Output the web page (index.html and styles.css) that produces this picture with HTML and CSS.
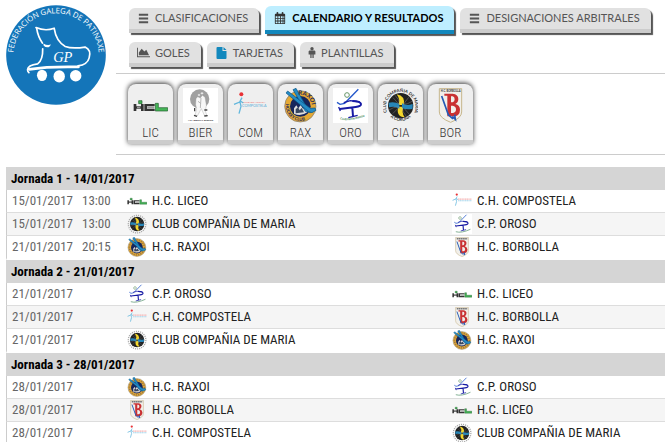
FILE: index.html
```
<!DOCTYPE html>
<html lang="es">
<head>
<meta charset="utf-8">
<title>Calendario y resultados</title>
<link rel="stylesheet" href="styles.css">
</head>
<body>
<svg class="sprite" aria-hidden="true">
  <symbol id="bars" viewBox="0 0 14 14"><path d="M2 2h10v2H2zM2 6h10v2H2zM2 10h10v2H2z"/></symbol>
  <symbol id="calendar" viewBox="0 0 14 14"><path fill-rule="evenodd" d="M2 2h1V1q0-1 1-1t1 1v1h4V1q0-1 1-1t1 1v1h1q1 0 1 1v10q0 1-1 1H2q-1 0-1-1V3q0-1 1-1zM2 5v2h2V5zm3 0v2h2V5zm3 0v2h2V5zm3 0v2h1V5zM2 8v2h2V8zm3 0v2h2V8zm3 0v2h2V8zm3 0v2h1V8zM2 11v2h2v-2zm3 0v2h2v-2zm3 0v2h2v-2zm3 0v2h1v-2z"/></symbol>
  <symbol id="chart" viewBox="0 0 14 12"><path d="M0 1h1v9h13v1H0zM2 9V6l3-4 3 3 2-2 3 6z"/></symbol>
  <symbol id="file" viewBox="0 0 12 13"><path d="M2 1h5v4h4v7q0 1-1 1H2q-1 0-1-1V2q0-1 1-1zM8 1l3 3H8z"/></symbol>
  <symbol id="person" viewBox="0 0 8 13"><circle cx="4" cy="2" r="2"/><path d="M1 4h6l1 1v4H6v4H4.500V9h-1v4H2V9H0V5z"/></symbol>

  <symbol id="liceo" viewBox="0 0 105 105">
    <path fill="#45b557" stroke="#205c2c" stroke-width="2" d="M17 38h10v9H17zM67 46h9v13h28v10H67z"/>
    <path fill="#333" d="M2 48h8v7h14v-7h8v21h-8v-7H10v7H2zM34 48h31v6H43v9h22v6H34z"/>
    <path fill="#999" d="M12 56h10v5H12zM45 55h19v7H45z"/>
  </symbol>
  <symbol id="bierzo" viewBox="0 0 105 105">
    <path fill="#fff" d="M0 0h105v105H0z"/><circle cx="50" cy="33" r="29" fill="#a0a0a0"/>
    <path fill="#f7f7f7" stroke="#999" stroke-width="1" d="M44 26l8 4 6-8 8 6 4 24-3 17 5 15h-7L55 62 43 84l-7-1 5-21-3-12 1-18z"/>
    <circle cx="48" cy="21" r="4" fill="#eee" stroke="#888"/><circle cx="57" cy="16" r="4" fill="#eee" stroke="#888"/>
    <path stroke="#444" stroke-width="4" d="M35 60v10M64 66h9M33 82l9 3M64 84l10-1"/>
    <path stroke="#999" stroke-width="2" d="M54 30l-2 30M45 40l8 6" fill="none"/>
    <text x="53" y="100" class="crest-text tiny" text-anchor="middle">HC ABERTAL BIERZO</text>
  </symbol>
  <symbol id="compostela" viewBox="0 0 105 105">
    <circle cx="25" cy="19" r="6" fill="#e83236"/>
    <path d="M27 29L20 42 3 49M21 42l3 13-6 22M22 39l9 6" fill="none" stroke="#62b7dd" stroke-width="4"/>
    <path class="crest-line" d="M32 43h71" stroke="#f5b5b5" stroke-width="6" stroke-dasharray="7 2"/>
    <path class="crest-line" d="M32 51h71" stroke="#a5d5ec" stroke-width="6" stroke-dasharray="7 2"/>
    <text x="30" y="45" class="crest-text club-red">CLUB DE HOCKEY</text>
    <text x="27" y="56" class="crest-text club-blue">COMPOSTELA</text>
  </symbol>
  <symbol id="raxoi" viewBox="0 0 105 105">
    <circle cx="52" cy="55" r="47" fill="#e5a934" stroke="#777" stroke-width="2"/><circle cx="52" cy="55" r="31" fill="#17265b"/>
    <circle class="crest-line" cx="52" cy="55" r="39" fill="none" stroke="#9b7a45" stroke-width="8" stroke-dasharray="7 5"/>
    <path d="M33 77V61l7-9 6 9 7-10 7 11 8-5 5 16q-20 14-40 4z" fill="#ddd"/>
    <path d="M38 76V64l7-6 5 9 6-7 7 13z" fill="#384760"/>
    <path d="M30 5l9-4 32 57 13 8-1 8-16-4z" fill="#258bc5" stroke="#075585" stroke-width="2"/>
    <path d="M9 15l5-6 68 52 14-1 3 7-12 7-10-3z" fill="#258bc5" stroke="#075585" stroke-width="2"/>
    <path id="raxoi-top" d="M46 21A35 35 0 0 1 86 62" fill="none"/><path id="raxoi-low" d="M9 48A44 44 0 0 0 92 74" fill="none"/>
    <text class="crest-text rax-name"><textPath href="#raxoi-top">RAXOI</textPath></text><text class="crest-text rax-club"><textPath href="#raxoi-low">HOCKEY CLUB</textPath></text>
  </symbol>
  <symbol id="oroso" viewBox="0 0 105 105">
    <path fill="#fff" d="M0 0h105v105H0z"/><circle cx="42" cy="21" r="7" fill="none" stroke="#669568" stroke-width="3"/>
    <path d="M76 4L35 46l-14 3-9-6" fill="none" stroke="#2559cb" stroke-width="4"/>
    <path d="M32 44l20-6 28 4" fill="none" stroke="#171ba4" stroke-width="4"/>
    <path d="M58 39q24 0 26 9 1 7-16 9l-48 6M58 59l2 25" fill="none" stroke="#171ba4" stroke-width="6"/>
    <path d="M17 57l5 12M46 89l28-7" fill="none" stroke="#171ba4" stroke-width="4"/>
    <path class="crest-line" d="M20 93q30 9 77-13" fill="none" stroke="#7fae91" stroke-width="5"/>
    <path id="oro-line" d="M21 94q33 9 82-12" fill="none"/>
    <text class="crest-text oro-name"><textPath href="#oro-line">CLUB PATÍN OROSO</textPath></text>
  </symbol>
  <symbol id="maria" viewBox="0 0 105 105">
    <circle cx="53" cy="53" r="38" fill="#222"/>
    <circle class="crest-line" cx="53" cy="53" r="46" fill="none" stroke="#aaa" stroke-width="7" stroke-dasharray="6 5"/>
    <path d="M41 19q27 5 21 32H46q7-16-5-32zM46 56h16q-8 16 3 32-27-3-19-32z" fill="#f3d62c"/>
    <path d="M17 44q20-3 32 4v14q-13-9-31-4zM57 46q14 9 32 2v14q-18 4-32-2z" fill="#2786b8"/>
    <path d="M36 22q14 13 14 27M89 39q-16 11-29 10M18 66q12-9 31-10M70 85q-13-13-12-28M30 29l18 20M77 28L62 48M29 77l18-18M78 78L64 62" fill="none" stroke="#aaa" stroke-width="1"/>
    <path id="maria-top" d="M15 78A44 44 0 1 1 91 78" fill="none"/><path id="maria-low" d="M21 86A46 46 0 0 0 85 86" fill="none"/>
    <text class="crest-text maria-name" text-anchor="middle"><textPath href="#maria-top" startOffset="50%">CLUB COMPAÑIA DE MARIA</textPath></text><text class="crest-text maria-name" text-anchor="middle"><textPath href="#maria-low" startOffset="50%">A CORUÑA</textPath></text>
  </symbol>
  <symbol id="borbolla" viewBox="0 0 105 105">
    <path d="M19 2h67v70q0 18-33 31Q19 90 19 72z" fill="#f1efea" stroke="#c6b68c" stroke-width="3"/>
    <path class="crest-line" d="M25 9h56" stroke="#777" stroke-width="7" stroke-dasharray="9 2"/>
    <text x="53" y="13" class="crest-text bor-name" text-anchor="middle">H.C. BORBOLLA</text>
    <path fill="#c93132" fill-rule="evenodd" d="M34 17h25q17 2 17 16 0 10-9 15 14 4 14 17 0 19-20 20H43V23h-9zM54 25v18h5q6-2 6-9 0-8-6-9zM54 53v22h6q9-1 9-11 0-9-10-11z"/>
    <path d="M26 24l20 56 14 13M65 80l2 14-9-9" fill="none" stroke="#2559b4" stroke-width="5"/>
  </symbol>
</svg>

<header class="top">
  <a class="brand" href="#" aria-label="Federación Galega de Patinaxe">
    <svg viewBox="20 15 297 297" aria-hidden="true">
      <circle cx="168.500" cy="163.500" r="148" fill="#1475b9"/>
      <path id="brand-ring" d="M46 200A127 127 0 1 1 291 200" fill="none"/>
      <text class="ring-text" text-anchor="middle"><textPath href="#brand-ring" startOffset="50%">FEDERACIÓN GALEGA DE PATINAXE</textPath></text>
      <g fill="none" stroke="#fff" stroke-width="5" stroke-linecap="round" stroke-linejoin="round">
        <path d="M109 82q28 12 54 2 6 40 33 54 20 8 59 2 19 9 12 32-5 20-33 24"/>
        <path d="M111 84q4 26 17 44M129 145q1 33-15 45-29 4-30 17 0 5 4 9"/>
        <path d="M89 206q58-9 146-7" stroke-width="8"/>
      </g>
      <path d="M131 129q11 7 23 3l-6 8q-10 2-16-4z" fill="#fff"/>
      <text x="160" y="185" class="brand-initials">GP</text>
      <ellipse cx="127" cy="224" rx="15" ry="17" fill="#fff"/><ellipse cx="178" cy="227" rx="17" ry="18" fill="#fff"/><ellipse cx="227" cy="225" rx="17" ry="17" fill="#fff"/>
    </svg>
  </a>
  <div class="menus">
    <nav class="tabs">
      <a class="tab" href="#"><svg class="icon"><use href="#bars"/></svg>CLASIFICACIONES</a>
      <a class="tab active" href="#" aria-current="page"><svg class="icon"><use href="#calendar"/></svg>CALENDARIO Y RESULTADOS</a>
      <a class="tab" href="#"><svg class="icon"><use href="#bars"/></svg>DESIGNACIONES ARBITRALES</a>
      <a class="tab" href="#"><svg class="icon"><use href="#chart"/></svg>GOLES</a>
      <a class="tab" href="#"><svg class="icon blue"><use href="#file"/></svg>TARJETAS</a>
      <a class="tab" href="#"><svg class="icon slim"><use href="#person"/></svg>PLANTILLAS</a>
    </nav>
    <nav class="teams">
      <a class="team" href="#"><svg><use href="#liceo"/></svg>LIC</a>
      <a class="team" href="#"><svg><use href="#bierzo"/></svg>BIER</a>
      <a class="team" href="#"><svg><use href="#compostela"/></svg>COM</a>
      <a class="team" href="#"><svg><use href="#raxoi"/></svg>RAX</a>
      <a class="team" href="#"><svg><use href="#oroso"/></svg>ORO</a>
      <a class="team" href="#"><svg><use href="#maria"/></svg>CIA</a>
      <a class="team" href="#"><svg><use href="#borbolla"/></svg>BOR</a>
    </nav>
  </div>
</header>

<main>
<table class="fixtures">
  <colgroup><col class="when"><col class="home"><col></colgroup>
  <tbody>
    <tr><th colspan="3">Jornada 1 - 14/01/2017</th></tr>
    <tr><td><time>15/01/2017</time><time>13:00</time></td><td><span class="club"><svg><use href="#liceo"/></svg>H.C. LICEO</span></td><td><span class="club"><svg><use href="#compostela"/></svg>C.H. COMPOSTELA</span></td></tr>
    <tr><td><time>15/01/2017</time><time>13:00</time></td><td><span class="club"><svg><use href="#maria"/></svg>CLUB COMPAÑIA DE MARIA</span></td><td><span class="club"><svg><use href="#oroso"/></svg>C.P. OROSO</span></td></tr>
    <tr><td><time>21/01/2017</time><time>20:15</time></td><td><span class="club"><svg><use href="#raxoi"/></svg>H.C. RAXOI</span></td><td><span class="club"><svg><use href="#borbolla"/></svg>H.C. BORBOLLA</span></td></tr>
  </tbody>
  <tbody>
    <tr><th colspan="3">Jornada 2 - 21/01/2017</th></tr>
    <tr><td><time>21/01/2017</time></td><td><span class="club"><svg><use href="#oroso"/></svg>C.P. OROSO</span></td><td><span class="club"><svg><use href="#liceo"/></svg>H.C. LICEO</span></td></tr>
    <tr><td><time>21/01/2017</time></td><td><span class="club"><svg><use href="#compostela"/></svg>C.H. COMPOSTELA</span></td><td><span class="club"><svg><use href="#borbolla"/></svg>H.C. BORBOLLA</span></td></tr>
    <tr><td><time>21/01/2017</time></td><td><span class="club"><svg><use href="#maria"/></svg>CLUB COMPAÑIA DE MARIA</span></td><td><span class="club"><svg><use href="#raxoi"/></svg>H.C. RAXOI</span></td></tr>
  </tbody>
  <tbody>
    <tr><th colspan="3">Jornada 3 - 28/01/2017</th></tr>
    <tr><td><time>28/01/2017</time></td><td><span class="club"><svg><use href="#raxoi"/></svg>H.C. RAXOI</span></td><td><span class="club"><svg><use href="#oroso"/></svg>C.P. OROSO</span></td></tr>
    <tr><td><time>28/01/2017</time></td><td><span class="club"><svg><use href="#borbolla"/></svg>H.C. BORBOLLA</span></td><td><span class="club"><svg><use href="#liceo"/></svg>H.C. LICEO</span></td></tr>
    <tr><td><time>28/01/2017</time></td><td><span class="club"><svg><use href="#compostela"/></svg>C.H. COMPOSTELA</span></td><td><span class="club"><svg><use href="#maria"/></svg>CLUB COMPAÑIA DE MARIA</span></td></tr>
  </tbody>
</table>
</main>
</body>
</html>
```
FILE: styles.css
```
* { box-sizing: border-box; }
html { overflow: hidden; }
body { margin: 0; background: #fff; color: #222; font: 13px/18px "Roboto Condensed", Roboto, sans-serif; }
a { color: inherit; text-decoration: none; }
.sprite { display: block; width: 0; height: 0; }

.top { display: flex; gap: 10px; padding-left: 6px; }
.brand { flex: none; width: 100px; padding-top: 5px; }
.brand svg { display: block; width: 100px; height: 100px; }
.menus { flex: 1; min-width: 0; }

.tabs { display: flex; flex-wrap: wrap; align-items: center; gap: 8px 6px; padding: 6px 0 6px 13px; border-bottom: 1px solid #ccc; }
.tab { display: flex; align-items: center; gap: 5px; height: 25px; padding: 0 11px 0 8px; border-bottom: 4px solid #ccc; border-radius: 6px 6px 0 0; background: #e1e1e1; box-shadow: 2px 2px 1px #555; color: #555; font: 11px/20px Lato, sans-serif; white-space: nowrap; }
.tab.active { height: 28px; padding-left: 9px; background: #beeeff; border-bottom-color: #1288bd; color: #000; font-weight: bold; }
.icon { width: 13px; height: 13px; fill: currentColor; }
.tab.active .icon { width: 12px; height: 12px; margin-right: 1px; fill: #333; }
.icon.blue { fill: #1288bd; }
.icon.slim { width: 8px; height: 11px; }

.teams { display: flex; gap: 5px; padding: 10px 0 10px 12px; border-bottom: 1px solid #ccc; }
.team { display: flex; flex-direction: column; align-items: center; width: 45px; height: 60px; padding-top: 4px; border-bottom: 4px solid #ccc; border-radius: 8px 8px 0 0; background: #efefef; box-shadow: 0 -1px 5px #333; color: #333; font: 300 13px/20px "Roboto Condensed", Roboto, sans-serif; }
.team svg { width: 35px; height: 35px; flex: none; }

main { padding: 12px 0 0 6px; }
.fixtures { width: 100%; table-layout: fixed; border-collapse: separate; border-spacing: 0; }
.when { width: 115px; }
.home { width: 325px; }
th { height: 23px; padding: 0 5px; background: #d5d5d5; color: #000; text-align: left; font-weight: bold; }
td { height: 23px; padding: 0 6px; border-bottom: 1px solid #ddd; white-space: nowrap; }
td:first-child { padding-left: 5px; border-left: 1px solid #ccc; color: #666; }
tr:nth-child(3) td { background: #f5f5f5; }
tr:last-child td { height: 24px; border-bottom: 2px solid #fff; }
time { margin-right: 9px; }
.club { display: flex; align-items: center; gap: 5px; }
.club svg { width: 20px; height: 20px; }

/* Crest lettering is drawn on the tiles; the small row crests use plain bands. */
.crest-text { display: var(--crest-text, inline); }
.crest-line { display: var(--crest-line, none); }
.fixtures svg { --crest-text: none; --crest-line: inline; }

.tiny { font: 8px Lato, sans-serif; }
.club-red { fill: #ed7777; font: 8px Lato, sans-serif; }
.club-blue { fill: #55add8; font: 11px Lato, sans-serif; }
.rax-name { fill: #17265b; font: bold 18px Lato, sans-serif; }
.rax-club { fill: #17265b; font: bold 13px Lato, sans-serif; }
.oro-name { fill: #287b46; font: bold 8px Lato, sans-serif; }
.maria-name { fill: #333; font: bold 13px Lato, sans-serif; }
.bor-name { fill: #333; font: bold 8px Lato, sans-serif; }
.ring-text { fill: #fff; font: 23px "Open Sans", sans-serif; }
.brand-initials { fill: #fff; font: italic 43px "Liberation Serif", serif; }
```
